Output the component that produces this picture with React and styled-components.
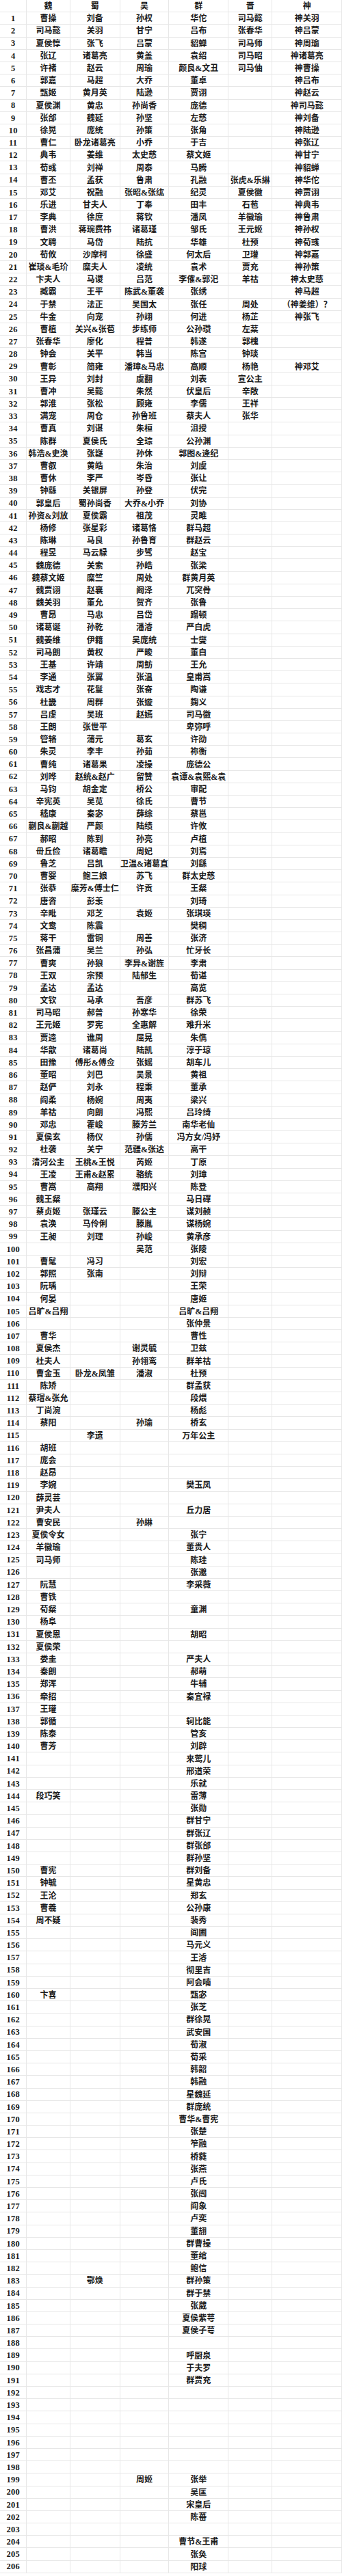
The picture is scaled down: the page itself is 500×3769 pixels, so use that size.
import React from "react";
import styled, { createGlobalStyle } from "styled-components";

const GlobalStyle = createGlobalStyle`
  html, body { margin: 0; padding: 0; background: #ffffff; }
  #root { width: 500px; }
`;

const COLS = "39.4px 63.4px 72.9px 71.8px 86.8px 64px 1fr";
const LINE = "#e7e7e7";

const Sheet = styled.div`
  display: flex;
  flex-direction: column;
  width: 500px;
  background: #ffffff;
`;

const Row = styled.div`
  display: grid;
  grid-template-columns: ${COLS};
  height: 18.2px;
`;

const Cell = styled.div`
  display: flex;
  align-items: center;
  justify-content: center;
  box-sizing: border-box;
  padding-top: 1px;
  border-right: 1px solid ${LINE};
  border-bottom: 1px solid ${LINE};
  font-family: "Liberation Serif", "Noto Sans CJK SC", serif;
  font-weight: 700;
  font-size: 12px;
  line-height: 1;
  color: ${(p) => (p.$head ? "#161616" : "#1a1a1a")};
  white-space: nowrap;
  overflow: hidden;
`;

const NumCell = styled(Cell)`
  font-family: "Liberation Serif", serif;
  font-size: 12.5px;
  letter-spacing: 0.2px;
`;

const HEAD = ["魏", "蜀", "吴", "群", "晋", "神"];

const RAW = `曹操|刘备|孙权|华佗|司马懿|神关羽
司马懿|关羽|甘宁|吕布|张春华|神吕蒙
夏侯惇|张飞|吕蒙|貂蝉|司马师|神周瑜
张辽|诸葛亮|黄盖|袁绍|司马昭|神诸葛亮
许褚|赵云|周瑜|颜良&文丑|司马伷|神曹操
郭嘉|马超|大乔|董卓||神吕布
甄姬|黄月英|陆逊|贾诩||神赵云
夏侯渊|黄忠|孙尚香|庞德||神司马懿
张郃|魏延|孙坚|左慈||神刘备
徐晃|庞统|孙策|张角||神陆逊
曹仁|卧龙诸葛亮|小乔|于吉||神张辽
典韦|姜维|太史慈|蔡文姬||神甘宁
荀彧|刘禅|周泰|马腾||神貂蝉
曹丕|孟获|鲁肃|孔融|张虎&乐綝|神华佗
邓艾|祝融|张昭&张纮|纪灵|夏侯徽|神贾诩
乐进|甘夫人|丁奉|田丰|石苞|神典韦
李典|徐庶|蒋钦|潘凤|羊徽瑜|神鲁肃
曹洪|蒋琬费祎|诸葛瑾|邹氏|王元姬|神孙权
文聘|马岱|陆抗|华雄|杜预|神荀彧
荀攸|沙摩柯|徐盛|何太后|卫瓘|神郭嘉
崔琰&毛玠|糜夫人|凌统|袁术|贾充|神孙策
卞夫人|马谡|吕范|李傕&郭汜|羊祜|神太史慈
臧霸|王平|陈武&董袭|张绣||神马超
于禁|法正|吴国太|张任|周处|（神姜维）？
牛金|向宠|孙翊|何进|杨芷|神张飞
曹植|关兴&张苞|步练师|公孙瓒|左棻|
张春华|廖化|程普|韩遂|郭槐|
钟会|关平|韩当|陈宫|钟琰|
曹彰|简雍|潘璋&马忠|高顺|杨艳|神邓艾
王异|刘封|虞翻|刘表|宣公主|
曹冲|吴懿|朱然|伏皇后|辛敞|
郭淮|张松|顾雍|李儒|王祥|
满宠|周仓|孙鲁班|蔡夫人|张华|
曹真|刘谌|朱桓|沮授||
陈群|夏侯氏|全琮|公孙渊||
韩浩&史涣|张嶷|孙休|郭图&逄纪||
曹叡|黄皓|朱治|刘虞||
曹休|李严|岑昏|张让||
钟繇|关银屏|孙登|伏完||
郭皇后|蜀孙尚香|大乔&小乔|刘协||
孙资&刘放|夏侯霸|祖茂|灵雎||
杨修|张星彩|诸葛恪|群马超||
陈琳|马良|孙鲁育|群赵云||
程昱|马云騄|步骘|赵宝||
魏庞德|关索|孙皓|张梁||
魏蔡文姬|糜竺|周处|群黄月英||
魏贾诩|赵襄|阚泽|兀突骨||
魏关羽|董允|贺齐|张鲁||
曹昂|马忠|吕岱|蹋顿||
诸葛诞|孙乾|潘濬|严白虎||
魏姜维|伊籍|吴庞统|士燮||
司马朗|黄权|严畯|董白||
王基|许靖|周鲂|王允||
李通|张翼|张温|皇甫嵩||
戏志才|花鬘|张奋|陶谦||
杜畿|周群|张嫙|麹义||
吕虔|吴班|赵嫣|司马徽||
王朗|张世平||卑弥呼||
管辂|蒲元|葛玄|许劭||
朱灵|李丰|孙茹|祢衡||
曹纯|诸葛果|凌操|庞德公||
刘晔|赵统&赵广|留赞|袁谭&袁熙&袁||
马钧|胡金定|桥公|审配||
辛宪英|吴苋|徐氏|曹节||
嵇康|秦宓|薛综|蔡邕||
蒯良&蒯越|严颜|陆绩|许攸||
郝昭|陈到|孙亮|卢植||
毌丘俭|诸葛瞻|周妃|刘焉||
鲁芝|吕凯|卫温&诸葛直|刘繇||
曹婴|鲍三娘|苏飞|群太史慈||
张恭|糜芳&傅士仁|许贡|王粲||
唐咨|彭羕||刘琦||
辛毗|邓芝|袁姬|张琪瑛||
文鸯|陈震||樊稠||
蒋干|雷铜|周善|张济||
张昌蒲|吴兰|孙弘|忙牙长||
曹爽|孙狼|李异&谢旌|李肃||
王双|宗预|陆郁生|荀谌||
孟达|孟达||高览||
文钦|马承|吾彦|群苏飞||
司马昭|郝普|孙寒华|徐荣||
王元姬|罗宪|全惠解|难升米||
贾逵|谯周|屈晃|朱儁||
华歆|诸葛尚|陆凯|淳于琼||
田豫|傅彤&傅佥|张媱|胡车儿||
董昭|刘巴|吴景|黄祖||
赵俨|刘永|程秉|董承||
阎柔|杨婉|周夷|梁兴||
羊祜|向朗|冯熙|吕玲绮||
邓忠|霍峻|滕芳兰|南华老仙||
夏侯玄|杨仪|孙儒|冯方女/冯妤||
杜袭|关宁|范疆&张达|高干||
清河公主|王桃&王悦|芮姬|丁原||
王凌|王甫&赵累|骆统|刘璋||
曹嵩|高翔|濮阳兴|陈登||
魏王粲|||马日磾||
蔡贞姬|张瑾云|滕公主|谋刘赪||
袁涣|马伶俐|滕胤|谋杨婉||
王昶|刘理|孙峻|黄承彦||
||吴范|张陵||
曹髦|冯习||刘宏||
郭照|张南||刘辩||
阮瑀|||王荣||
何晏|||唐姬||
吕旷&吕翔|||吕旷&吕翔||
|||张仲景||
曹华|||曹性||
夏侯杰||谢灵毓|卫兹||
杜夫人||孙翎鸾|群羊祜||
曹金玉|卧龙&凤雏|潘淑|杜预||
陈矫|||群孟获||
蔡瑁&张允|||段煨||
丁尚涴|||杨彪||
蔡阳||孙瑜|桥玄||
|李遗||万年公主||
胡班|||||
庞会|||||
赵昂|||||
李婉|||樊玉凤||
薛灵芸|||||
尹夫人|||丘力居||
曹安民||孙綝|||
夏侯令女|||张宁||
羊徽瑜|||董贵人||
司马师|||陈珪||
|||张邈||
阮慧|||李采薇||
曹铁|||||
荀粲|||童渊||
杨阜|||||
夏侯恩|||胡昭||
夏侯荣|||||
娄圭|||严夫人||
秦朗|||郝萌||
郑浑|||牛辅||
牵招|||秦宜禄||
王瓘|||||
郭循|||轲比能||
陈泰|||管亥||
曹芳|||刘辟||
|||来莺儿||
|||邢道荣||
|||乐就||
段巧笑|||雷薄||
|||张勋||
|||群甘宁||
|||群张辽||
|||群张郃||
|||群孙坚||
曹宪|||群刘备||
钟毓|||星黄忠||
王沦|||郑玄||
曹羲|||公孙康||
周不疑|||裴秀||
|||阎圃||
|||马元义||
|||王濬||
|||彻里吉||
|||阿会喃||
卞喜|||甄宓||
|||张芝||
|||群徐晃||
|||武安国||
|||荀淑||
|||荀采||
|||韩韶||
|||韩融||
|||星魏延||
|||群庞统||
|||曹华&曹宪||
|||张楚||
|||笮融||
|||桥蕤||
|||张燕||
|||卢氏||
|||张闿||
|||阎象||
|||卢奕||
|||董翓||
|||群曹操||
|||董绾||
|||鲍信||
|鄂焕||群孙策||
|||群于禁||
|||张葳||
|||夏侯紫萼||
|||夏侯子萼||
|||||
|||呼厨泉||
|||于夫罗||
|||群贾充||
|||||
|||||
|||||
|||||
|||||
|||||
|||||
||周姬|张举||
|||吴匡||
|||宋皇后||
|||陈蕃||
|||||
|||曹节&王甫||
|||张奂||
|||阳球||`;

const ROWS = RAW.split("\n").map((line) => {
  const parts = line.split("|");
  while (parts.length < 6) parts.push("");
  return parts.slice(0, 6);
});

export default function App() {
  return (
    <>
      <GlobalStyle />
      <Sheet>
        <Row>
          <NumCell $head />
          {HEAD.map((h) => (
            <Cell key={h} $head>
              {h}
            </Cell>
          ))}
        </Row>
        {ROWS.map((cells, i) => (
          <Row key={i}>
            <NumCell>{i + 1}</NumCell>
            {cells.map((c, j) => (
              <Cell key={j}>{c}</Cell>
            ))}
          </Row>
        ))}
      </Sheet>
    </>
  );
}
